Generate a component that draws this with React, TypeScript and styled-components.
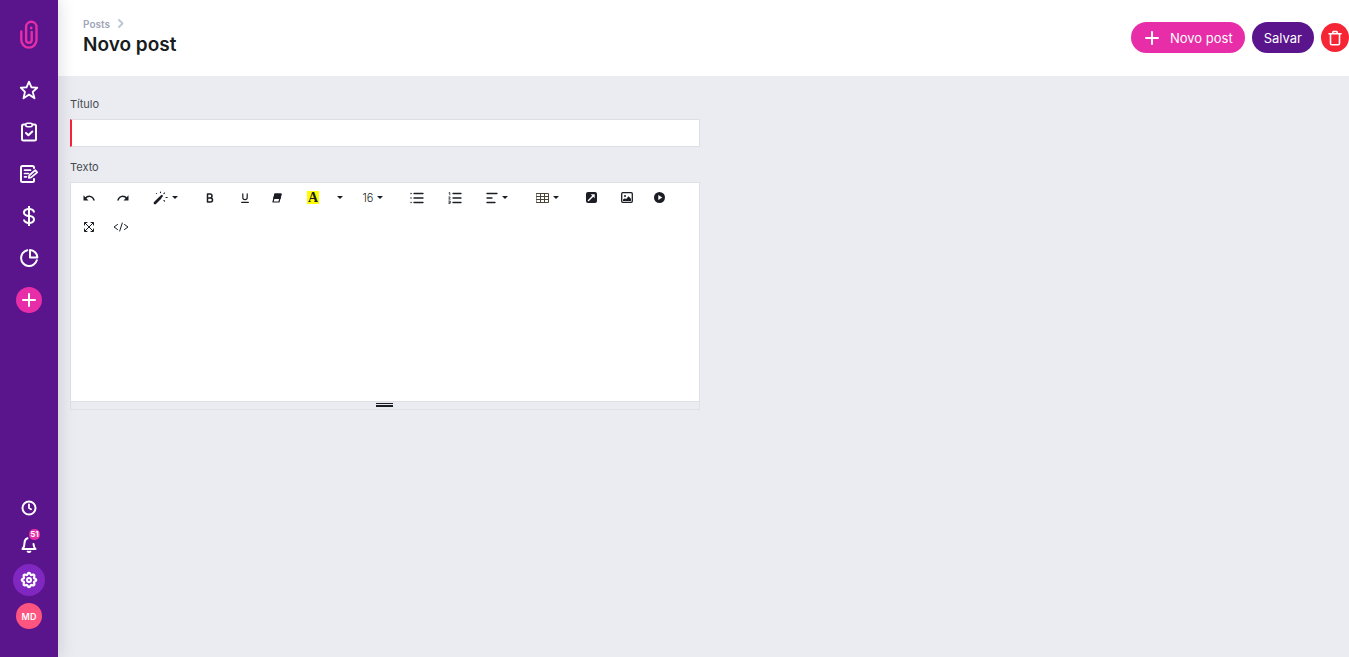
import React from "react";
import styled, { createGlobalStyle } from "styled-components";
import { BiStar, BiDollar } from "react-icons/bi";

const GlobalStyle = createGlobalStyle`
  *, *::before, *::after { box-sizing: border-box; }
  body {
    margin: 0;
    background: #ebecf1;
    color: #181c20;
    font-family: Inter, "Liberation Sans", sans-serif;
  }
  button { font-family: inherit; cursor: pointer; }
`;

const Shell = styled.div`
  display: flex;
  min-height: 100vh;
`;

const Sidebar = styled.nav`
  position: relative;
  z-index: 1;
  flex: 0 0 58px;
  display: flex;
  flex-direction: column;
  justify-content: space-between;
  align-items: center;
  padding: 20px 0 28px;
  background: #5a148c;
  box-shadow: 0 0 16px rgba(40, 30, 70, 0.18);
`;

const NavGroup = styled.div<{ $gap: number }>`
  display: flex;
  flex-direction: column;
  align-items: center;
  gap: ${(p) => p.$gap}px;
`;

const LogoLink = styled.a`
  display: block;
  height: 30px;
  margin-bottom: 11px;
`;

const NavLink = styled.a<{ $size: number; $fill?: string }>`
  position: relative;
  display: flex;
  align-items: center;
  justify-content: center;
  width: ${(p) => p.$size}px;
  height: ${(p) => p.$size}px;
  border-radius: 50%;
  background: ${(p) => p.$fill ?? "transparent"};
  color: #fff;
  text-decoration: none;
`;

const Badge = styled.span`
  position: absolute;
  top: 1px;
  right: 5px;
  width: 11px;
  height: 11px;
  border-radius: 5px;
  background: #e72da7;
  font-size: 8px;
  line-height: 11px;
  font-weight: 700;
  text-align: center;
`;

const Avatar = styled(NavLink)`
  margin-top: 3px;
  font-size: 9px;
  font-weight: 600;
`;

const Content = styled.div`
  flex: 1;
  min-width: 0;
`;

const Header = styled.header`
  display: flex;
  align-items: center;
  justify-content: space-between;
  height: 76px;
  padding-left: 25px;
  background: #fff;
`;

const Heading = styled.div`
  padding-bottom: 4px;
`;

const Breadcrumb = styled.a`
  display: flex;
  align-items: center;
  gap: 8px;
  color: #a1a5b9;
  font-size: 10px;
  font-weight: 600;
  line-height: 16px;
  text-decoration: none;
`;

const Title = styled.h1`
  margin: 0;
  font-size: 19px;
  font-weight: 600;
  line-height: 25px;
`;

const Actions = styled.div`
  display: flex;
  align-items: center;
  gap: 7px;
  padding-bottom: 1px;
`;

const ActionButton = styled.button<{ $fill: string }>`
  display: flex;
  align-items: center;
  gap: 9px;
  height: 31px;
  padding: 0 12px;
  border: 0;
  border-radius: 16px;
  background: ${(p) => p.$fill};
  color: #fff;
  font-size: 13px;
`;

const DeleteButton = styled.button`
  display: flex;
  align-items: center;
  justify-content: center;
  width: 28px;
  height: 29px;
  padding: 0;
  border: 0;
  border-radius: 50%;
  background: #f62536;
  color: #fff;
`;

const Main = styled.main`
  display: grid;
  grid-template-columns: 1fr 1fr;
  gap: 8px;
  padding: 20px 12px;
`;

const Form = styled.form`
  display: flex;
  flex-direction: column;
`;

const Label = styled.label`
  margin-bottom: 7px;
  color: #444950;
  font-size: 11px;
  line-height: 16px;
`;

const TitleInput = styled.input`
  height: 28px;
  margin-bottom: 12px;
  padding: 0 8px;
  border: 1px solid #dcdfe6;
  border-left: 2px solid #f62536;
  border-radius: 0;
  background: #fff;
  font: 12px Inter, sans-serif;
  outline: none;
`;

const Editor = styled.div`
  border: 1px solid #dfe1e6;
  background: #fff;
`;

const Toolbar = styled.div`
  display: flex;
  flex-wrap: wrap;
  column-gap: 4px;
  padding: 0 1px;
`;

const ToolGroup = styled.div`
  display: flex;
`;

const Tool = styled.button<{ $width: number }>`
  display: flex;
  align-items: center;
  justify-content: center;
  gap: 4px;
  width: ${(p) => p.$width}px;
  height: 29px;
  padding: 0;
  border: 0;
  background: transparent;
  color: #1a1e24;
  font-size: 11px;
  font-weight: 300;
`;

const Highlight = styled.span`
  width: 12px;
  height: 13px;
  background: #ff0;
  font: bold 14px/13px "Liberation Serif", serif;
`;

const Caret = styled.span`
  border: 3px solid transparent;
  border-top-color: #1a1e24;
  border-bottom: 0;
`;

const TextArea = styled.textarea`
  display: block;
  width: 100%;
  height: 160px;
  padding: 8px;
  border: 0;
  background: transparent;
  font: 12px Inter, sans-serif;
  resize: none;
  outline: none;
`;

const ResizeBar = styled.div`
  display: flex;
  flex-direction: column;
  align-items: center;
  gap: 1px;
  height: 8px;
  padding-top: 1px;
  border-top: 1px solid #dfe1e6;
  background: #ebecf1;
`;

const Grip = styled.span<{ $height: number }>`
  width: 17px;
  height: ${(p) => p.$height}px;
  background: #1a1e24;
`;

type DrawingProps = { w: number; h: number; sw?: number; children: React.ReactNode };

function Drawing({ w, h, sw = 2, children }: DrawingProps) {
  return (
    <svg
      width={w}
      height={h}
      viewBox={`0 0 ${w} ${h}`}
      fill="none"
      stroke="currentColor"
      strokeWidth={sw}
      strokeLinecap="round"
      strokeLinejoin="round"
      aria-hidden="true"
    >
      {children}
    </svg>
  );
}

const gearOutline =
  Array.from({ length: 97 }, (_, i) => {
    const a = (i / 96) * Math.PI * 2;
    const r = 6.3 + 0.9 * Math.cos(8 * a);
    return `${i ? "L" : "M"}${(9 + r * Math.cos(a)).toFixed(2)} ${(9 + r * Math.sin(a)).toFixed(2)}`;
  }).join("") + "Z";

const Logo = () => (
  <svg width="18" height="30" viewBox="0 0 18 30" fill="none" stroke="#e72da7" strokeWidth="2.4" strokeLinecap="round" aria-hidden="true">
    <path d="M1.300 11.500V20a7.500 7.500 0 0 0 15.200 0V7a5.200 5.200 0 0 0-10.400 0V20a2.800 2.800 0 0 0 5.600 0V12" />
    <circle cx="11.200" cy="8" r="1.400" fill="#e72da7" stroke="none" />
  </svg>
);

const Clipboard = () => (
  <Drawing w={18} h={20}>
    <rect x="2" y="2.500" width="14" height="16" rx="1.500" />
    <rect x="5.800" y="1.200" width="6.400" height="3.600" rx="1.500" strokeWidth="1.600" fill="#5a148c" />
    <path d="m6 11 2.400 2.300L12.300 9.500" />
  </Drawing>
);

const Draft = () => (
  <Drawing w={20} h={20}>
    <path d="M15 4V3.500A1.500 1.500 0 0 0 13.500 2h-10A1.500 1.500 0 0 0 2 3.500v13A1.500 1.500 0 0 0 3.500 18h10a1.500 1.500 0 0 0 1.500-1.500V15" />
    <path d="M5.500 6.200h6M5.500 9.500h4M5.500 12.800h2" strokeWidth="1.700" />
    <path d="m9.800 13.800.4-2.300 6-5.300 2 2.100-6 5z" strokeWidth="1.700" />
  </Drawing>
);

const Pie = () => (
  <Drawing w={20} h={20}>
    <path d="M8.300 2.200A8 8 0 1 0 17.800 12.200" />
    <path d="M11 1.900V9.400h7.300A7.800 7.800 0 0 0 11 1.900Z" />
  </Drawing>
);

const Plus = ({ size, inset = 1 }: { size: number; inset?: number }) => (
  <Drawing w={size} h={size}>
    <path d={`M${size / 2} ${inset}v${size - 2 * inset}M${inset} ${size / 2}h${size - 2 * inset}`} />
  </Drawing>
);

const Clock = () => (
  <Drawing w={16} h={16}>
    <circle cx="8" cy="8" r="6.500" />
    <path d="M8 4.500V8l2 1.200" strokeWidth="1.800" />
  </Drawing>
);

const Bell = () => (
  <Drawing w={16} h={18}>
    <path d="M6.500 3.200C4.500 3.800 3.600 5.600 3.500 8c0 3-.5 4.500-2 6h13c-1.300-1.300-1.800-2.500-2-5" />
    <path d="M6.700 16.500q1.300 1 2.600 0" />
  </Drawing>
);

const Gear = () => (
  <Drawing w={18} h={18}>
    <path d={gearOutline} strokeWidth="2.200" />
    <circle cx="9" cy="9" r="2" />
  </Drawing>
);

const Trash = () => (
  <Drawing w={14} h={16} sw={1.6}>
    <path d="M1 3.800h12M2.500 4v9.500c0 .8.500 1.300 1.300 1.300h6.400c.8 0 1.300-.5 1.300-1.300V4M4.500 3.500l.6-2h3.800l.6 2" />
  </Drawing>
);

const Undo = () => (
  <Drawing w={12} h={8} sw={1.4}>
    <path d="M2 4.500C5 1.200 9.500 1.500 11 6" />
    <path d="M.5 1.200v5.300h5z" fill="currentColor" stroke="none" />
  </Drawing>
);

const Redo = () => (
  <Drawing w={12} h={8} sw={1.4}>
    <path d="M10 4.500C7 1.200 2.500 1.500 1 6" />
    <path d="M11.500 1.200v5.300h-5z" fill="currentColor" stroke="none" />
  </Drawing>
);

const Wand = () => (
  <Drawing w={15} h={14} sw={1.1}>
    <path d="m2 12 5-5" strokeWidth="2.800" />
    <path d="m7.800 6 1-1" strokeWidth="2.200" />
    <path d="M3.500 2.500h.1M7.500 1v.6M11.500 2l-.6.6M13 6.500h1.200M11 9.500l.6.6" />
  </Drawing>
);

const Eraser = () => (
  <Drawing w={10} h={10} sw={1.2}>
    <path d="M3 1h6L7 9H1z" />
    <path d="M3 1h6L8 5.500H1.800z" fill="currentColor" />
  </Drawing>
);

const BoldGlyph = () => (
  <Drawing w={8} h={10} sw={1.5}>
    <path d="M1.500 1H4a2 2 0 0 1 0 4H1.500zM1.500 5h3a2 2 0 0 1 0 4h-3z" />
  </Drawing>
);

const UnderlineGlyph = () => (
  <Drawing w={8} h={10} sw={1.2}>
    <path d="M1.800.8V4.500a2.200 2.200 0 0 0 4.400 0V.8M.6 9.300h6.800" />
  </Drawing>
);

const BulletList = () => (
  <Drawing w={14} h={12} sw={1.3}>
    <path d="M4 1.500h9M4 6h9M4 10.500h9M1 1.500h.1M1 6h.1M1 10.500h.1" />
  </Drawing>
);

const NumberList = () => (
  <Drawing w={14} h={12} sw={1.3}>
    <path d="M5 1.500h8M5 6h8M5 10.500h8" />
    <path d="M1 .8l.8-.3v2.300M.8 5h1.400L.8 7.200h1.400M.8 9h1.400v2.400H.8M1 10.200h1" strokeWidth="0.800" />
  </Drawing>
);

const AlignLeft = () => (
  <Drawing w={12} h={12} sw={1.3}>
    <path d="M1 1.500h10M1 6h5M1 10.500h8" />
  </Drawing>
);

const Grid = () => (
  <Drawing w={13} h={10} sw={1}>
    <path d="M.5.5h12v9H.5zM.5 3.500h12M.5 6.500h12M4.500.5v9M8.500.5v9" stroke="#4a4438" />
  </Drawing>
);

const LinkBox = () => (
  <Drawing w={11} h={11} sw={1.5}>
    <rect width="11" height="11" rx="2" fill="currentColor" stroke="none" />
    <path d="m2.500 8.500 4-4" stroke="#fff" />
    <path d="M4.700 2.300h4v4z" fill="#fff" stroke="none" />
  </Drawing>
);

const Picture = () => (
  <Drawing w={12} h={11} sw={1.3}>
    <rect x=".7" y=".7" width="10.600" height="9.600" rx="1" />
    <circle cx="4" cy="4" r="1" fill="currentColor" stroke="none" />
    <path d="M2 9V7.500l2-1.300 1 1 2.500-3L10 6.800V9z" fill="currentColor" stroke="none" />
  </Drawing>
);

const Play = () => (
  <Drawing w={11} h={11}>
    <circle cx="5.500" cy="5.500" r="5.500" fill="currentColor" stroke="none" />
    <path d="m4.300 3 4 2.500-4 2.500z" fill="#fff" stroke="none" />
  </Drawing>
);

const Expand = () => (
  <Drawing w={10} h={10} sw={1}>
    <path d="m1 1 8 8M9 1 1 9M.5 3V.5H3M7 .5h2.500V3M9.500 7v2.500H7M3 9.500H.5V7" />
  </Drawing>
);

const Code = () => (
  <Drawing w={16} h={10} sw={1}>
    <path d="M4.500 2.500 1 5l3.500 2.500M11.500 2.500 15 5l-3.500 2.500M9.300 1 6.700 9" />
  </Drawing>
);

const Chevron = () => (
  <Drawing w={6} h={9} sw={1.8}>
    <path d="m1 1 3.500 3.500L1 8" stroke="#bcc6d8" />
  </Drawing>
);

type ToolSpec = { label: string; width: number; icon: React.ReactNode };

const toolGroups: ToolSpec[][] = [
  [
    { label: "Desfazer", width: 34, icon: <Undo /> },
    { label: "Refazer", width: 34, icon: <Redo /> },
  ],
  [{ label: "Estilo", width: 42, icon: <><Wand /><Caret /></> }],
  [
    { label: "Negrito", width: 40, icon: <BoldGlyph /> },
    { label: "Sublinhado", width: 30, icon: <UnderlineGlyph /> },
    { label: "Limpar", width: 34, icon: <Eraser /> },
  ],
  [
    { label: "Cor", width: 30, icon: <Highlight>A</Highlight> },
    { label: "Mais cores", width: 24, icon: <Caret /> },
  ],
  [{ label: "Tamanho", width: 34, icon: <>16<Caret /></> }],
  [
    { label: "Lista", width: 46, icon: <BulletList /> },
    { label: "Lista numerada", width: 30, icon: <NumberList /> },
  ],
  [{ label: "Alinhamento", width: 46, icon: <><AlignLeft /><Caret /></> }],
  [{ label: "Tabela", width: 46, icon: <><Grid /><Caret /></> }],
  [
    { label: "Link", width: 34, icon: <LinkBox /> },
    { label: "Imagem", width: 38, icon: <Picture /> },
    { label: "Vídeo", width: 26, icon: <Play /> },
  ],
  [
    { label: "Tela cheia", width: 34, icon: <Expand /> },
    { label: "Código", width: 30, icon: <Code /> },
  ],
];

export default function App() {
  return (
    <>
      <GlobalStyle />
      <Shell>
        <Sidebar>
          <NavGroup $gap={16}>
            <LogoLink href="#" aria-label="Início"><Logo /></LogoLink>
            <NavLink href="#" $size={26} aria-label="Favoritos"><BiStar size={22} /></NavLink>
            <NavLink href="#" $size={26} aria-label="Tarefas"><Clipboard /></NavLink>
            <NavLink href="#" $size={26} aria-label="Posts"><Draft /></NavLink>
            <NavLink href="#" $size={26} aria-label="Financeiro"><BiDollar size={24} /></NavLink>
            <NavLink href="#" $size={26} aria-label="Relatórios"><Pie /></NavLink>
            <NavLink href="#" $size={26} $fill="#e72da7" aria-label="Adicionar"><Plus size={14} /></NavLink>
          </NavGroup>
          <NavGroup $gap={4}>
            <NavLink href="#" $size={32} aria-label="Histórico"><Clock /></NavLink>
            <NavLink href="#" $size={32} aria-label="Notificações"><Bell /><Badge>51</Badge></NavLink>
            <NavLink href="#" $size={32} $fill="#7f27c0" aria-label="Configurações"><Gear /></NavLink>
            <Avatar href="#" $size={26} $fill="#fe5480">MD</Avatar>
          </NavGroup>
        </Sidebar>
        <Content>
          <Header>
            <Heading>
              <Breadcrumb href="#">Posts<Chevron /></Breadcrumb>
              <Title>Novo post</Title>
            </Heading>
            <Actions>
              <ActionButton type="button" $fill="#e72da7"><Plus size={18} inset={3} />Novo post</ActionButton>
              <ActionButton type="submit" form="post" $fill="#5a148c">Salvar</ActionButton>
              <DeleteButton type="button" aria-label="Excluir"><Trash /></DeleteButton>
            </Actions>
          </Header>
          <Main>
            <Form id="post">
              <Label htmlFor="titulo">Título</Label>
              <TitleInput id="titulo" type="text" />
              <Label htmlFor="texto">Texto</Label>
              <Editor>
                <Toolbar>
                  {toolGroups.map((group) => (
                    <ToolGroup key={group[0].label}>
                      {group.map((tool) => (
                        <Tool key={tool.label} type="button" aria-label={tool.label} $width={tool.width}>
                          {tool.icon}
                        </Tool>
                      ))}
                    </ToolGroup>
                  ))}
                </Toolbar>
                <TextArea id="texto" />
                <ResizeBar><Grip $height={1} /><Grip $height={2} /></ResizeBar>
              </Editor>
            </Form>
          </Main>
        </Content>
      </Shell>
    </>
  );
}
